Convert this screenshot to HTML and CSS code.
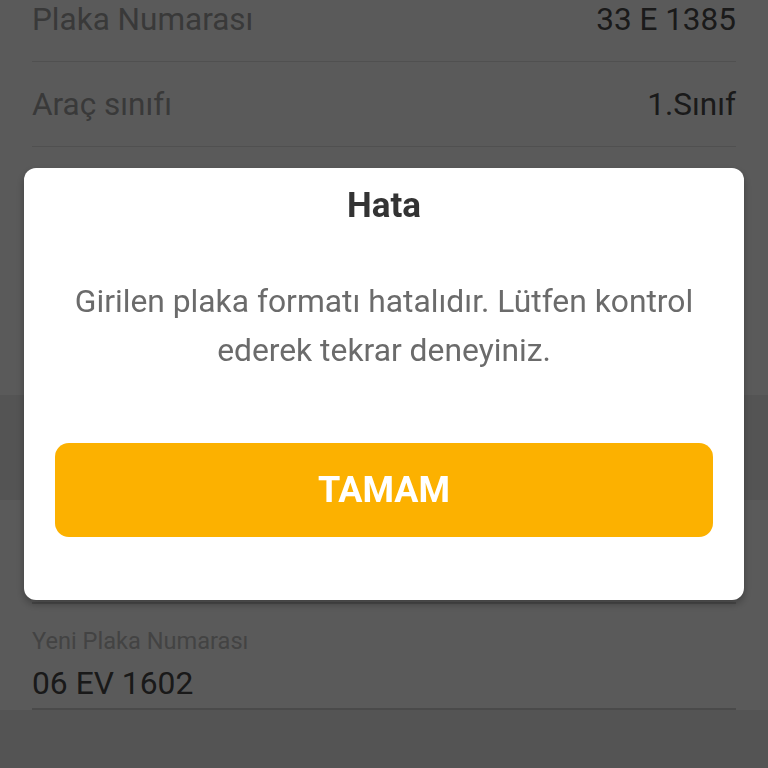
FILE: index.html
```html
<!DOCTYPE html>
<html lang="tr">
<head>
<meta charset="UTF-8">
<meta name="viewport" content="width=device-width, initial-scale=1.0">
<title>Plaka Değişikliği</title>
<link rel="stylesheet" href="styles.css">
</head>
<body>

<main class="screen">
  <!-- vehicle details, scrolled a little -->
  <section class="details">
    <div class="row">
      <span class="row-label">Plaka Numarası</span>
      <span class="row-value">33 E 1385</span>
    </div>
    <div class="row">
      <span class="row-label">Araç sınıfı</span>
      <span class="row-value">1.Sınıf</span>
    </div>
  </section>

  <div class="separator"></div>

  <section class="form">
    <div class="field field-blank"></div>
    <div class="field">
      <label class="field-label" for="newPlate">Yeni Plaka Numarası</label>
      <input class="field-input" id="newPlate" type="text" value="06 EV 1602">
    </div>
  </section>
</main>

<!-- error dialog -->
<div class="overlay">
  <div class="dialog">
    <h2 class="dialog-title">Hata</h2>
    <p class="dialog-text">Girilen plaka formatı hatalıdır. Lütfen kontrol ederek tekrar deneyiniz.</p>
    <button class="dialog-btn" type="button">TAMAM</button>
  </div>
</div>

</body>
</html>
```

FILE: styles.css
```css
body {
  margin: 0;
  padding: 0;
  font-family: Roboto, "Noto Sans", Arial, sans-serif;
  background-color: #eeeeee;
  height: 100vh;
  overflow: hidden;
}
.screen {
  display: flex;
  flex-direction: column;
}
.details {
  margin-top: -23px;
  padding-bottom: 248px;
  background-color: #fff;
}
.row {
  display: flex;
  justify-content: space-between;
  align-items: center;
  height: 84px;
  margin: 0 32px;
  border-bottom: 1px solid #e2e2e2;
  font-size: 31.5px;
}
.row-label {
  color: #a3a3a3;
}
.row-value {
  color: #4a4a4a;
}
.separator {
  height: 105px;
  background-color: #eeeeee;
}
.form {
  background-color: #fff;
}
.field {
  display: flex;
  flex-direction: column;
  gap: 8px;
  margin: 0 32px;
  padding: 23px 0 5px;
  border-bottom: 2px solid #d2d2d2;
}
.field-blank {
  height: 74px;
}
.field-label {
  font-size: 23.6px;
  line-height: 28px;
  color: #bdbdbd;
}
.field-input {
  font-family: inherit;
  font-size: 31.8px;
  line-height: 40px;
  height: 40px;
  padding: 0;
  border: none;
  outline: none;
  color: #474747;
  background: transparent;
}
/* dialog */
.overlay {
  position: fixed;
  top: 0;
  left: 0;
  right: 0;
  bottom: 0;
  display: flex;
  justify-content: center;
  align-items: center;
  background-color: rgba(0, 0, 0, 0.647);
}
.dialog {
  width: calc(100% - 48px);
  box-sizing: border-box;
  padding: 18px 31px 63px;
  background-color: #fff;
  border-radius: 12px;
  box-shadow: 0 4px 8px rgba(0, 0, 0, 0.3);
  text-align: center;
}
.dialog-title {
  margin: 0;
  font-size: 35px;
  line-height: 40px;
  font-weight: 700;
  color: #333;
}
.dialog-text {
  margin: 51px 0 0;
  font-size: 31.8px;
  line-height: 49px;
  color: #6b6b6b;
}
.dialog-btn {
  display: block;
  width: 100%;
  height: 94px;
  margin-top: 68px;
  padding: 0;
  font-family: inherit;
  font-size: 36px;
  font-weight: 700;
  color: #fff;
  background-color: #fcb100;
  border: none;
  border-radius: 14px;
  cursor: pointer;
}
```
